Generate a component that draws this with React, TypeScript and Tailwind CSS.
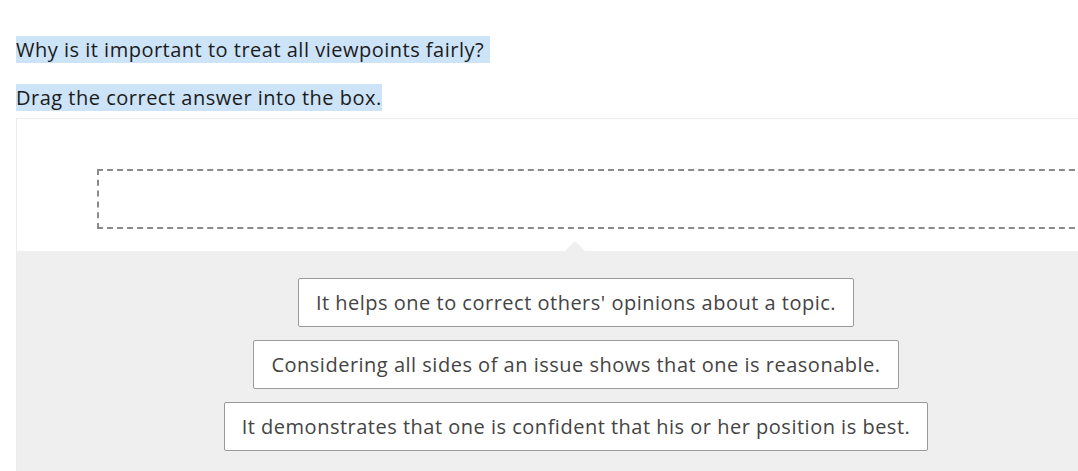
const answers = [
  "It helps one to correct others' opinions about a topic.",
  'Considering all sides of an issue shows that one is reasonable.',
  'It demonstrates that one is confident that his or her position is best.',
];

export default function App() {
  return (
    <div className="w-screen h-screen overflow-hidden bg-white font-['Open_Sans',sans-serif] tracking-[0.5px]">
      <div className="pl-4 pt-9">
        <p className="text-[20px] leading-[28px] text-[#1b1b1b]">
          <span className="bg-[#cce3f8] pr-[6px]">Why is it important to treat all viewpoints fairly?</span>
        </p>
        <p className="mt-5 text-[20px] leading-[27px] text-[#1b1b1b]">
          <span className="bg-[#cce3f8]">Drag the correct answer into the box.</span>
        </p>

        <div className="mt-[7px] w-[1120px] border border-[#ececec]">
          <div className="bg-white pt-[50px] pb-[22px] pl-[80px] pr-[20px]">
            <div className="h-[60px] border-2 border-dashed border-[#8a8a8a]"></div>
          </div>

          <div className="relative bg-[#efefef] pt-[27px] pb-8 flex flex-col items-center gap-[13px]">
            <div className="absolute -top-[10px] left-[548px] w-0 h-0 border-x-[10px] border-x-transparent border-b-[10px] border-b-[#efefef]"></div>
            {answers.map((a) => (
              <div
                key={a}
                className="bg-white border border-[#9a9a9a] rounded-[2px] px-[17px] h-[49px] flex items-center text-[20px] text-[#444] cursor-move"
              >
                {a}
              </div>
            ))}
          </div>
        </div>
      </div>
    </div>
  );
}
